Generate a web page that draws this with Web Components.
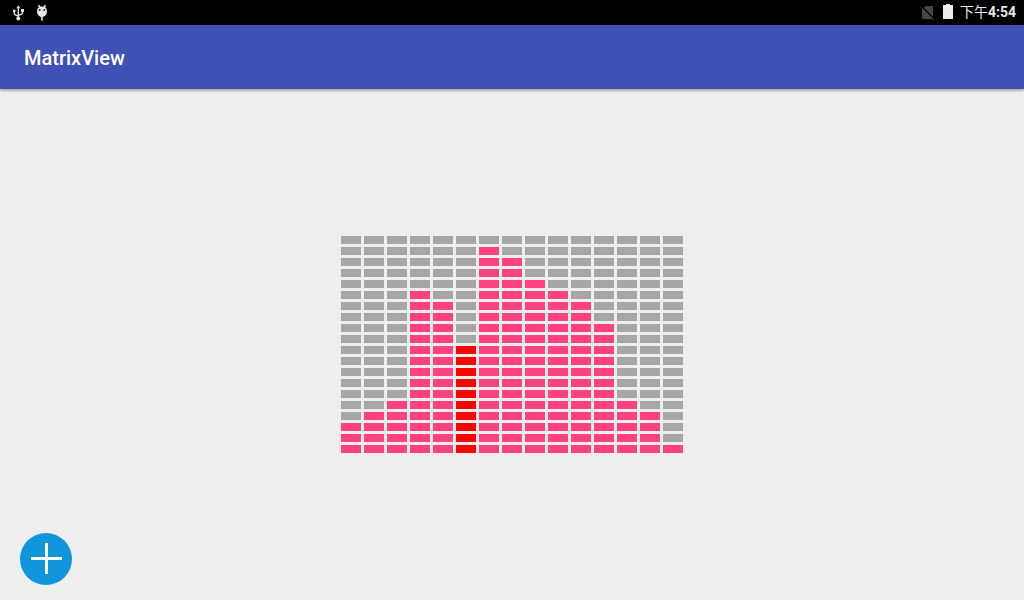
<!DOCTYPE html>
<html lang="zh-CN">
<head>
<meta charset="utf-8">
<meta name="viewport" content="width=device-width, initial-scale=1">
<title>MatrixView</title>
<style>
  html, body { height: 100%; margin: 0; }
  body { font-family: Roboto, "Noto Sans CJK SC", sans-serif; background: #eeeeee; }
</style>
</head>
<body>
<matrix-app>
  <status-bar slot="status">下午<b>4:54</b></status-bar>
  <app-bar slot="bar">MatrixView</app-bar>
  <matrix-view rows="20" values="3 4 5 15 14 10 19 18 16 15 14 12 5 4 1" selected="5"></matrix-view>
  <add-button slot="action" label="Add"></add-button>
</matrix-app>
<script>
class MatrixApp extends HTMLElement {
  constructor() {
    super();
    this.attachShadow({ mode: "open" }).innerHTML = `
      <style>
        :host { display: flex; flex-direction: column; min-height: 100vh; position: relative; background: #eeeeee; }
        main { flex: 1; display: flex; align-items: center; justify-content: center; }
        .action { position: absolute; left: 20px; bottom: 15px; }
      </style>
      <slot name="status"></slot>
      <slot name="bar"></slot>
      <main><slot></slot></main>
      <div class="action"><slot name="action"></slot></div>`;
  }
}

class StatusBar extends HTMLElement {
  constructor() {
    super();
    this.attachShadow({ mode: "open" }).innerHTML = `
      <style>
        :host { display: flex; align-items: center; justify-content: space-between; height: 25px;
                padding: 0 8px; background: #000; color: #e6e6e6; font-size: 14px; line-height: 22px; font-weight: 400; }
        ::slotted(b) { font-weight: 700; }
        .group { display: flex; align-items: center; gap: 4px; }
        svg { display: block; }
        .clock { padding: 0 0 2px 2px; }
      </style>
      <div class="group">
        <svg width="20" height="25" viewBox="0 0 20 25" aria-hidden="true">
          <g fill="none" stroke="#e2e2e2" stroke-width="1.3">
            <path d="M10.3 7v11M6.2 11v2.4q0 1.2 1.2 1.5l2.9 1.2M14.5 11v1.8q0 1.2-1.2 1.5l-3 1"/>
          </g>
          <g fill="#e2e2e2">
            <path d="M10.3 5.2l2 3h-4z"/><circle cx="10.3" cy="18.5" r="2"/>
            <circle cx="6.2" cy="10.8" r="1.4"/><path d="M13 9h3v3h-3z"/>
          </g>
        </svg>
        <svg width="20" height="25" viewBox="0 0 20 25" aria-hidden="true">
          <path d="M6.5 5.2l1.4 2M13.5 5.2l-1.4 2M10 15.5v5.2" stroke="#e8e8e8" stroke-width="1.5"/>
          <path d="M10 6.4c3.2 0 5 1.8 5 4.8s-2.2 5.8-5 5.8-5-2.8-5-5.8 1.8-4.8 5-4.8z" fill="#e8e8e8"/>
          <circle cx="7.7" cy="10" r="1" fill="#222"/><circle cx="12.3" cy="10" r="1" fill="#222"/>
        </svg>
      </div>
      <div class="group">
        <svg width="18" height="25" viewBox="0 0 18 25" aria-hidden="true">
          <path d="M6 6h6q1 0 1 1v11q0 1-1 1H3q-1 0-1-1V9z" fill="#444"/>
          <path d="M2 7L14.500 19.500" stroke="#000" stroke-width="1.6"/>
          <path d="M1 7.300L13.500 19.800" stroke="#484848" stroke-width="1"/>
        </svg>
        <svg width="12" height="25" viewBox="0 0 12 25" aria-hidden="true">
          <path d="M4 4h4v1h3v14H1V5h3z" fill="#ececec"/>
        </svg>
        <span class="clock"><slot></slot></span>
      </div>`;
  }
}

class AppBar extends HTMLElement {
  constructor() {
    super();
    this.attachShadow({ mode: "open" }).innerHTML = `
      <style>
        :host { display: flex; align-items: center; height: 64px; padding: 0 24px; background: #3f51b5;
                color: #fff; box-shadow: 0 2px 2px rgba(0,0,0,.28); }
        h1 { margin: 0; padding-top: 2px; font-size: 20px; line-height: 24px; font-weight: 500; }
      </style>
      <h1><slot></slot></h1>`;
  }
}

class MatrixView extends HTMLElement {
  connectedCallback() {
    const rows = Number(this.getAttribute("rows"));
    const values = this.getAttribute("values").split(" ").map(Number);
    const selected = Number(this.getAttribute("selected"));
    const root = this.shadowRoot || this.attachShadow({ mode: "open" });
    root.innerHTML = `
      <style>
        :host { display: flex; gap: 3px; }
        .column { display: flex; flex-direction: column-reverse; gap: 3px; }
        i { display: block; width: 20px; height: 8px; background: #a6a6a6; }
        .on { background: #ff4081; }
        .selected .on { background: #ff0000; }
      </style>` +
      values.map((v, c) => `<div class="column${c === selected ? " selected" : ""}">` +
        Array.from({ length: rows }, (_, r) => `<i${r < v ? ' class="on"' : ""}></i>`).join("") +
        "</div>").join("");
  }
}

class AddButton extends HTMLElement {
  connectedCallback() {
    const root = this.shadowRoot || this.attachShadow({ mode: "open" });
    root.innerHTML = `
      <style>
        :host { display: block; }
        button { display: block; width: 52px; height: 52px; padding: 0; border: 0; border-radius: 50%;
                 background: #1296db; cursor: pointer; }
        svg { display: block; }
      </style>
      <button type="button" aria-label="${this.getAttribute("label")}">
        <svg width="52" height="52" viewBox="0 0 52 52" aria-hidden="true">
          <path d="M25 10h3v31h-3zM11 24h31v3H11z" fill="#fff"/>
        </svg>
      </button>`;
  }
}

customElements.define("matrix-app", MatrixApp);
customElements.define("status-bar", StatusBar);
customElements.define("app-bar", AppBar);
customElements.define("matrix-view", MatrixView);
customElements.define("add-button", AddButton);
</script>
</body>
</html>
